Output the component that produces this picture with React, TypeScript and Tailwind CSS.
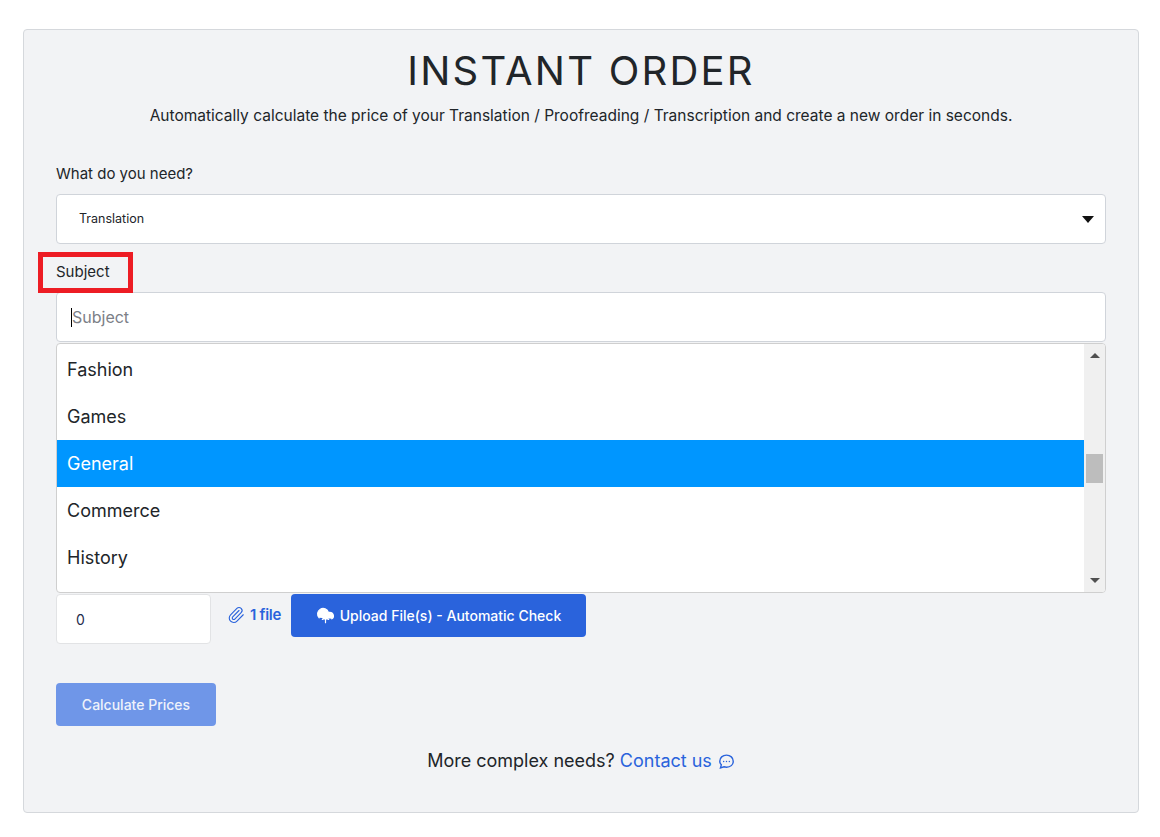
import React from "react";
import { Paperclip, CloudUpload } from "lucide-react";

const body = { fontFamily: '"Inter", "Noto Sans", sans-serif' };

function Row({ label, active }: { label: string; active?: boolean }) {
  return (
    <div className={active ? "h-[47px] flex items-center pl-[10px] text-[18px] bg-[#0096ff] text-white" : "h-[47px] flex items-center pl-[10px] text-[18px] text-[#212529]"}>
      {label}
    </div>
  );
}

export default function App() {
  return (
    <div className="w-[1160px] h-[837px] bg-white pt-[29px] pl-[23px] overflow-hidden" style={body}>
      <div className="w-[1116px] h-[784px] bg-[#f2f3f5] border border-[#d5d8dc] rounded-[4px] px-[32px] pt-[17px] text-[#212529]">
        <h1 className="text-center text-[40px] leading-[48px] tracking-[2.2px] text-[#212529]" style={{ fontFamily: '"Inter", sans-serif' }}>INSTANT ORDER</h1>
        <p className="text-center text-[15.5px] leading-[24px] mt-[9px]">Automatically calculate the price of your Translation / Proofreading / Transcription and create a new order in seconds.</p>

        <label className="block text-[15px] leading-[24px] mt-[34px]">What do you need?</label>
        <div className="mt-[8px] h-[50px] bg-white border border-[#d0d4da] rounded-[4px] flex items-center justify-between pl-[22px] pr-[11px]">
          <span className="text-[12.5px]">Translation</span>
          <svg width="12" height="7" viewBox="0 0 12 7"><path d="M0 0h12L6 7z" fill="#111" /></svg>
        </div>

        <div className="relative mt-[16px] h-[24px]">
          <label className="block text-[15px] leading-[24px]">Subject</label>
          <div className="absolute left-[-18px] top-[-8px] w-[95px] h-[41px] border-[5px] border-[#ed1c24]" />
        </div>
        <div className="mt-[8px] h-[50px] bg-white border border-[#d0d4da] rounded-[4px] flex items-center pl-[14px]">
          <span className="w-px h-[19px] bg-black" />
          <span className="text-[16px] text-[#7c8087]">Subject</span>
        </div>

        <div className="mt-[1px] h-[250px] bg-white border border-[#cfcfcf] rounded-[4px] flex overflow-hidden">
          <div className="flex-1 pt-[2px]">
            <Row label="Fashion" />
            <Row label="Games" />
            <Row label="General" active />
            <Row label="Commerce" />
            <Row label="History" />
          </div>
          <div className="w-[21px] bg-[#f0f0f0] flex flex-col items-center">
            <svg className="mt-[9px] shrink-0" width="10" height="5" viewBox="0 0 10 5"><path d="M0 5h10L5 0z" fill="#505050" /></svg>
            <div className="mt-[96px] w-[17px] h-[29px] bg-[#bdbdbd] shrink-0" />
            <svg className="mt-auto mb-[9px] shrink-0" width="10" height="5" viewBox="0 0 10 5"><path d="M0 0h10L5 5z" fill="#505050" /></svg>
          </div>
        </div>

        <div className="mt-[1px] flex items-start">
          <div className="w-[155px] h-[50px] bg-white border border-[#e2e3e5] rounded-[4px] flex items-center pl-[19px] text-[14px] text-[#1f2d4d]">0</div>
          <Paperclip className="ml-[16px] mt-[12px] text-[#2a63dc]" size={18} strokeWidth={1.5} />
          <span className="ml-[5px] mt-[9px] text-[15px] leading-[24px] font-semibold text-[#2a63dc] tracking-[-0.3px]">1 file</span>
          <button className="ml-[10px] w-[295px] h-[43px] bg-[#2a63dc] rounded-[4px] text-white text-[14px] font-medium flex items-center justify-center gap-[5px]">
            <CloudUpload size={19} fill="#fff" strokeWidth={1.5} />
            Upload File(s) - Automatic Check
          </button>
        </div>

        <button className="block mt-[39px] w-[160px] h-[43px] bg-[#6f96e8] rounded-[4px] text-[#eef2fb] text-[14px] font-medium">Calculate Prices</button>

        <div className="mt-[21px] flex items-center justify-center text-[18px] leading-[27px]">
          <span>More complex needs?&nbsp;</span>
          <span className="text-[#2a63dc]">Contact us</span>
          <svg className="ml-[6px] mt-[2px]" width="17" height="17" viewBox="0 0 24 24" fill="none" stroke="#2a63dc" strokeWidth="2"><path d="M12 3c5.5 0 9.5 3.7 9.5 8.7s-4 8.3-9.5 8.3c-1.300 0-2.500-.2-3.600-.6L3.500 21l1.200-4.300C3.300 15.300 2.500 13.600 2.500 11.700 2.500 6.700 6.500 3 12 3z" /><circle cx="8" cy="12" r="1" fill="#2a63dc" stroke="none" /><circle cx="12" cy="12" r="1" fill="#2a63dc" stroke="none" /><circle cx="16" cy="12" r="1" fill="#2a63dc" stroke="none" /></svg>
        </div>
      </div>
    </div>
  );
}
